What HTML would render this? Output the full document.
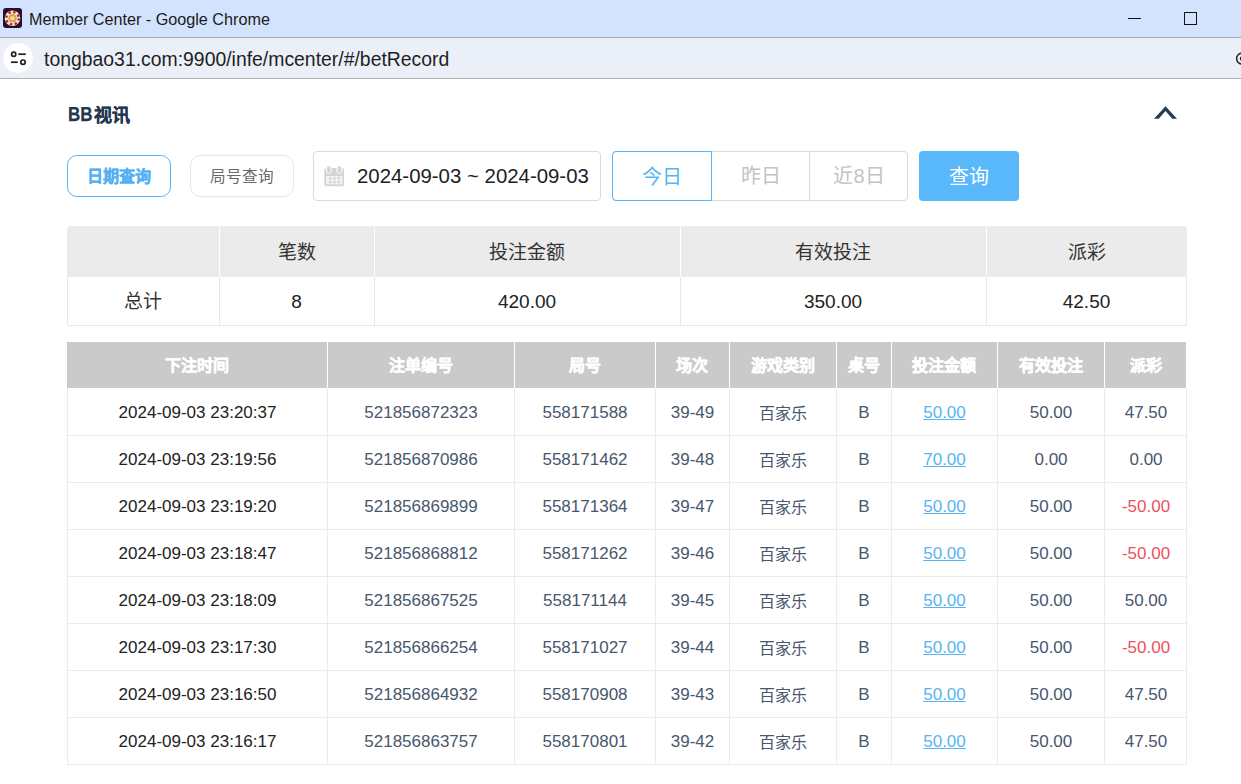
<!DOCTYPE html>
<html lang="zh-CN"><head><meta charset="utf-8">
<style>
*{box-sizing:border-box;margin:0;padding:0}
html,body{width:1241px;height:784px;overflow:hidden;background:#fff;font-family:"Liberation Sans",sans-serif}
.abs{position:absolute}
#titlebar{left:0;top:0;width:1241px;height:38px;background:#d3e3fd;border-bottom:1px solid #ababab}
#addr{left:0;top:38px;width:1241px;height:41px;background:#ebeff8;border-bottom:1px solid #b0b0b0}
.title{left:29px;top:10.8px;font-size:16.18px;color:#1b1b1b;white-space:nowrap}
.url{left:44px;top:49.5px;font-size:19.4px;color:#1f1f1f;white-space:nowrap}
.tt{white-space:nowrap;line-height:1}
.bbt{font-size:18px;font-weight:bold;color:#253650;white-space:nowrap;line-height:22px;-webkit-text-stroke:0.25px #253650}
.btn{top:155px;width:104px;height:42px;border-radius:10px;font-size:16px;text-align:center;line-height:42px;white-space:nowrap}
.b1{left:67px;border:1px solid #5ab4f5;color:#52b0f3;font-weight:bold;-webkit-text-stroke:0.3px #52b0f3;text-indent:-1px}
.b2{left:190px;border:1px solid #e6e6e6;color:#6a6a6a;font-size:15.6px}
.date{left:313px;top:151px;width:288px;height:50px;border:1px solid #dcdcdc;border-radius:4px}
.dtxt{left:357px;top:164px;font-size:20.4px;color:#1e1e1e;white-space:nowrap;line-height:24px}
.seg{top:151px;height:50px;font-size:20px;text-align:center;line-height:50.5px;color:#c4c4c4;white-space:nowrap}
.q{left:919px;top:151px;width:100px;height:50px;background:#58b8fa;border-radius:4px;color:#fff;font-size:20px;text-align:center;line-height:52px}
.sum{left:67px;top:226px;width:1120px;height:100px;border:1px solid #e8e8e8;border-radius:4px 4px 0 0;overflow:hidden}
.sh{left:67px;top:226px;width:1120px;height:51px;background:#ebebeb;border-radius:4px 4px 0 0}
.sc{font-size:19px;color:#222;text-align:center;white-space:nowrap;line-height:24px}
.mh{background:#cacaca}
.th{top:343px;height:46px;line-height:46px;text-align:center;color:#fff;font-weight:bold;font-size:16px;white-space:nowrap;-webkit-text-stroke:0.45px #fff}
.vw{top:342px;width:1px;height:46px;background:#fff}
.mb{border-left:1px solid #ebebeb;border-right:1px solid #ebebeb}
.hl{left:67px;width:1120px;height:1px;background:#ebebeb}
.vg{top:388px;width:1px;height:376px;background:#ebebeb}
.td{height:47px;line-height:47px;padding-top:1px;padding-left:1px;text-align:center;font-size:17px;color:#48576d;white-space:nowrap}
.blk{color:#222}
.cj{font-size:16px;position:relative;top:0.5px}
.lnk{color:#58b4f2}
.red{color:#f0505c}

</style></head><body>
<div id="titlebar" class="abs"></div>
<div id="addr" class="abs"></div>
<!-- favicon -->
<svg class="abs" style="left:3px;top:8px" width="19" height="20" viewBox="0 0 19 20">
<rect x="0" y="0" width="19" height="20" rx="3" fill="#2b0c29"/>
<circle cx="9.5" cy="10.2" r="7.8" fill="#f3ece6"/>
<circle cx="9.5" cy="10.2" r="6.2" fill="none" stroke="#b02a33" stroke-width="2.4" stroke-dasharray="2.4 2.47"/>
<circle cx="9.5" cy="10.2" r="4.2" fill="#dca232"/>
<circle cx="9.5" cy="10.2" r="2.3" fill="#efd9a0"/>
</svg>
<div class="abs tt title">Member Center - Google Chrome</div>
<!-- window buttons -->
<div class="abs" style="left:1128px;top:18px;width:13px;height:1px;background:#111"></div>
<div class="abs" style="left:1184px;top:12px;width:13px;height:13px;border:1px solid #111"></div>
<!-- site icon -->
<div class="abs" style="left:3px;top:43px;width:30px;height:30px;border-radius:50%;background:#fff"></div>
<svg class="abs" style="left:0;top:40px" width="36" height="36" viewBox="0 40 36 36">
<circle cx="13.7" cy="54.2" r="2.1" fill="none" stroke="#1f1f1f" stroke-width="1.7"/>
<line x1="18.3" y1="54.2" x2="25.8" y2="54.2" stroke="#1f1f1f" stroke-width="1.7"/>
<line x1="10.9" y1="62.2" x2="17.8" y2="62.2" stroke="#1f1f1f" stroke-width="1.7"/>
<circle cx="23" cy="62.2" r="2.2" fill="none" stroke="#1f1f1f" stroke-width="1.7"/>
</svg>
<div class="abs tt url">tongbao31.com:9900/infe/mcenter/#/betRecord</div>
<svg class="abs" style="left:1234px;top:51px" width="7" height="15" viewBox="0 0 7 15">
<circle cx="8" cy="7.6" r="5.4" fill="none" stroke="#222" stroke-width="1.5"/>
<circle cx="8" cy="7.6" r="2.2" fill="#222"/>
</svg>

<div class="abs bbt" style="left:68px;top:102.5px;font-size:19.5px;transform:scaleX(0.87);transform-origin:0 0">BB</div><div class="abs bbt" style="left:93.5px;top:105px;font-size:18px">视讯</div>
<svg class="abs" style="left:1150px;top:103px" width="32" height="20" viewBox="0 0 32 20">
<polygon points="4,15.7 15.5,3.2 27,15.7 22.3,15.7 15.5,8 8.7,15.7" fill="#2a3a50"/>
</svg>
<div class="abs btn b1">日期查询</div>
<div class="abs btn b2">局号查询</div>
<div class="abs date"></div>
<svg class="abs" style="left:324px;top:166px" width="21" height="21" viewBox="0 0 21 21">
<rect x="0.3" y="2" width="19.7" height="18.2" rx="2" fill="#d4d4d4"/>
<rect x="2" y="10" width="16.4" height="8.4" fill="#f1f1f1"/>
<rect x="2.4" y="-0.2" width="4.8" height="7.6" rx="2.2" fill="#d4d4d4" stroke="#fff" stroke-width="1"/>
<rect x="13" y="-0.2" width="4.8" height="7.6" rx="2.2" fill="#d4d4d4" stroke="#fff" stroke-width="1"/>
<g fill="#d0d0d0"><rect x="5.2" y="11.3" width="2.2" height="2.2" rx="0.6"/><rect x="9.4" y="11.3" width="2.2" height="2.2" rx="0.6"/><rect x="13.6" y="11.3" width="2.2" height="2.2" rx="0.6"/>
<rect x="5.2" y="15.1" width="2.2" height="2.2" rx="0.6"/><rect x="9.4" y="15.1" width="2.2" height="2.2" rx="0.6"/><rect x="13.6" y="15.1" width="2.2" height="2.2" rx="0.6"/></g>
</svg>
<div class="abs dtxt">2024-09-03 ~ 2024-09-03</div>
<div class="abs" style="left:612px;top:151px;width:296px;height:50px;border:1px solid #dcdcdc;border-radius:4px"></div>
<div class="abs" style="left:809px;top:151px;width:1px;height:50px;background:#dcdcdc"></div>
<div class="abs seg" style="left:612px;width:100px;border:1px solid #5ab4f5;border-radius:4px 0 0 4px;color:#58b4f2">今日</div>
<div class="abs seg" style="left:712px;width:98px">昨日</div>
<div class="abs seg" style="left:810px;width:98px">近8日</div>
<div class="abs q">查询</div>

<div class="abs sum"></div>
<div class="abs sh"></div>
<div class="abs sc" style="left:67px;top:240px;width:152px"></div>
<div class="abs sc" style="left:67px;top:290px;color:#333;width:152px">总计</div>
<div class="abs sc" style="left:219px;top:241px;color:#333;width:155px">笔数</div>
<div class="abs sc" style="left:219px;top:289.5px;width:155px">8</div>
<div class="abs sc" style="left:374px;top:241px;color:#333;width:306px">投注金额</div>
<div class="abs sc" style="left:374px;top:289.5px;width:306px">420.00</div>
<div class="abs sc" style="left:680px;top:241px;color:#333;width:306px">有效投注</div>
<div class="abs sc" style="left:680px;top:289.5px;width:306px">350.00</div>
<div class="abs sc" style="left:986px;top:241px;color:#333;width:201px">派彩</div>
<div class="abs sc" style="left:986px;top:289.5px;width:201px">42.50</div>
<div class="abs" style="left:219px;top:227px;width:1px;height:50px;background:#fff"></div>
<div class="abs" style="left:219px;top:277px;width:1px;height:48px;background:#e8e8e8"></div>
<div class="abs" style="left:374px;top:227px;width:1px;height:50px;background:#fff"></div>
<div class="abs" style="left:374px;top:277px;width:1px;height:48px;background:#e8e8e8"></div>
<div class="abs" style="left:680px;top:227px;width:1px;height:50px;background:#fff"></div>
<div class="abs" style="left:680px;top:277px;width:1px;height:48px;background:#e8e8e8"></div>
<div class="abs" style="left:986px;top:227px;width:1px;height:50px;background:#fff"></div>
<div class="abs" style="left:986px;top:277px;width:1px;height:48px;background:#e8e8e8"></div>
<div class="abs mh" style="left:67px;top:342px;width:1119px;height:46px"></div>
<div class="abs th" style="left:67px;width:260px">下注时间</div>
<div class="abs th" style="left:327px;width:187px">注单编号</div>
<div class="abs th" style="left:514px;width:141px">局号</div>
<div class="abs th" style="left:655px;width:74px">场次</div>
<div class="abs th" style="left:729px;width:107px">游戏类别</div>
<div class="abs th" style="left:836px;width:55px">桌号</div>
<div class="abs th" style="left:891px;width:106px">投注金额</div>
<div class="abs th" style="left:997px;width:107px">有效投注</div>
<div class="abs th" style="left:1104px;width:83px">派彩</div>
<div class="abs vw" style="left:327px"></div>
<div class="abs vw" style="left:514px"></div>
<div class="abs vw" style="left:655px"></div>
<div class="abs vw" style="left:729px"></div>
<div class="abs vw" style="left:836px"></div>
<div class="abs vw" style="left:891px"></div>
<div class="abs vw" style="left:997px"></div>
<div class="abs vw" style="left:1104px"></div>
<div class="abs mb" style="left:67px;top:388px;width:1120px;height:377px"></div>
<div class="abs hl" style="top:435px"></div>
<div class="abs hl" style="top:482px"></div>
<div class="abs hl" style="top:529px"></div>
<div class="abs hl" style="top:576px"></div>
<div class="abs hl" style="top:623px"></div>
<div class="abs hl" style="top:670px"></div>
<div class="abs hl" style="top:717px"></div>
<div class="abs hl" style="top:764px"></div>
<div class="abs vg" style="left:327px"></div>
<div class="abs vg" style="left:514px"></div>
<div class="abs vg" style="left:655px"></div>
<div class="abs vg" style="left:729px"></div>
<div class="abs vg" style="left:836px"></div>
<div class="abs vg" style="left:891px"></div>
<div class="abs vg" style="left:997px"></div>
<div class="abs vg" style="left:1104px"></div>
<div class="abs td blk" style="left:67px;top:388px;width:260px">2024-09-03 23:20:37</div>
<div class="abs td" style="left:327px;top:388px;width:187px">521856872323</div>
<div class="abs td" style="left:514px;top:388px;width:141px">558171588</div>
<div class="abs td" style="left:655px;top:388px;width:74px">39-49</div>
<div class="abs td" style="left:729px;top:388px;width:107px"><span class="cj">百家乐</span></div>
<div class="abs td" style="left:836px;top:388px;width:55px">B</div>
<div class="abs td lnk" style="left:891px;top:388px;width:106px"><u>50.00</u></div>
<div class="abs td" style="left:997px;top:388px;width:107px">50.00</div>
<div class="abs td" style="left:1104px;top:388px;width:83px">47.50</div>
<div class="abs td blk" style="left:67px;top:435px;width:260px">2024-09-03 23:19:56</div>
<div class="abs td" style="left:327px;top:435px;width:187px">521856870986</div>
<div class="abs td" style="left:514px;top:435px;width:141px">558171462</div>
<div class="abs td" style="left:655px;top:435px;width:74px">39-48</div>
<div class="abs td" style="left:729px;top:435px;width:107px"><span class="cj">百家乐</span></div>
<div class="abs td" style="left:836px;top:435px;width:55px">B</div>
<div class="abs td lnk" style="left:891px;top:435px;width:106px"><u>70.00</u></div>
<div class="abs td" style="left:997px;top:435px;width:107px">0.00</div>
<div class="abs td" style="left:1104px;top:435px;width:83px">0.00</div>
<div class="abs td blk" style="left:67px;top:482px;width:260px">2024-09-03 23:19:20</div>
<div class="abs td" style="left:327px;top:482px;width:187px">521856869899</div>
<div class="abs td" style="left:514px;top:482px;width:141px">558171364</div>
<div class="abs td" style="left:655px;top:482px;width:74px">39-47</div>
<div class="abs td" style="left:729px;top:482px;width:107px"><span class="cj">百家乐</span></div>
<div class="abs td" style="left:836px;top:482px;width:55px">B</div>
<div class="abs td lnk" style="left:891px;top:482px;width:106px"><u>50.00</u></div>
<div class="abs td" style="left:997px;top:482px;width:107px">50.00</div>
<div class="abs td red" style="left:1104px;top:482px;width:83px">-50.00</div>
<div class="abs td blk" style="left:67px;top:529px;width:260px">2024-09-03 23:18:47</div>
<div class="abs td" style="left:327px;top:529px;width:187px">521856868812</div>
<div class="abs td" style="left:514px;top:529px;width:141px">558171262</div>
<div class="abs td" style="left:655px;top:529px;width:74px">39-46</div>
<div class="abs td" style="left:729px;top:529px;width:107px"><span class="cj">百家乐</span></div>
<div class="abs td" style="left:836px;top:529px;width:55px">B</div>
<div class="abs td lnk" style="left:891px;top:529px;width:106px"><u>50.00</u></div>
<div class="abs td" style="left:997px;top:529px;width:107px">50.00</div>
<div class="abs td red" style="left:1104px;top:529px;width:83px">-50.00</div>
<div class="abs td blk" style="left:67px;top:576px;width:260px">2024-09-03 23:18:09</div>
<div class="abs td" style="left:327px;top:576px;width:187px">521856867525</div>
<div class="abs td" style="left:514px;top:576px;width:141px">558171144</div>
<div class="abs td" style="left:655px;top:576px;width:74px">39-45</div>
<div class="abs td" style="left:729px;top:576px;width:107px"><span class="cj">百家乐</span></div>
<div class="abs td" style="left:836px;top:576px;width:55px">B</div>
<div class="abs td lnk" style="left:891px;top:576px;width:106px"><u>50.00</u></div>
<div class="abs td" style="left:997px;top:576px;width:107px">50.00</div>
<div class="abs td" style="left:1104px;top:576px;width:83px">50.00</div>
<div class="abs td blk" style="left:67px;top:623px;width:260px">2024-09-03 23:17:30</div>
<div class="abs td" style="left:327px;top:623px;width:187px">521856866254</div>
<div class="abs td" style="left:514px;top:623px;width:141px">558171027</div>
<div class="abs td" style="left:655px;top:623px;width:74px">39-44</div>
<div class="abs td" style="left:729px;top:623px;width:107px"><span class="cj">百家乐</span></div>
<div class="abs td" style="left:836px;top:623px;width:55px">B</div>
<div class="abs td lnk" style="left:891px;top:623px;width:106px"><u>50.00</u></div>
<div class="abs td" style="left:997px;top:623px;width:107px">50.00</div>
<div class="abs td red" style="left:1104px;top:623px;width:83px">-50.00</div>
<div class="abs td blk" style="left:67px;top:670px;width:260px">2024-09-03 23:16:50</div>
<div class="abs td" style="left:327px;top:670px;width:187px">521856864932</div>
<div class="abs td" style="left:514px;top:670px;width:141px">558170908</div>
<div class="abs td" style="left:655px;top:670px;width:74px">39-43</div>
<div class="abs td" style="left:729px;top:670px;width:107px"><span class="cj">百家乐</span></div>
<div class="abs td" style="left:836px;top:670px;width:55px">B</div>
<div class="abs td lnk" style="left:891px;top:670px;width:106px"><u>50.00</u></div>
<div class="abs td" style="left:997px;top:670px;width:107px">50.00</div>
<div class="abs td" style="left:1104px;top:670px;width:83px">47.50</div>
<div class="abs td blk" style="left:67px;top:717px;width:260px">2024-09-03 23:16:17</div>
<div class="abs td" style="left:327px;top:717px;width:187px">521856863757</div>
<div class="abs td" style="left:514px;top:717px;width:141px">558170801</div>
<div class="abs td" style="left:655px;top:717px;width:74px">39-42</div>
<div class="abs td" style="left:729px;top:717px;width:107px"><span class="cj">百家乐</span></div>
<div class="abs td" style="left:836px;top:717px;width:55px">B</div>
<div class="abs td lnk" style="left:891px;top:717px;width:106px"><u>50.00</u></div>
<div class="abs td" style="left:997px;top:717px;width:107px">50.00</div>
<div class="abs td" style="left:1104px;top:717px;width:83px">47.50</div>
</body></html>
